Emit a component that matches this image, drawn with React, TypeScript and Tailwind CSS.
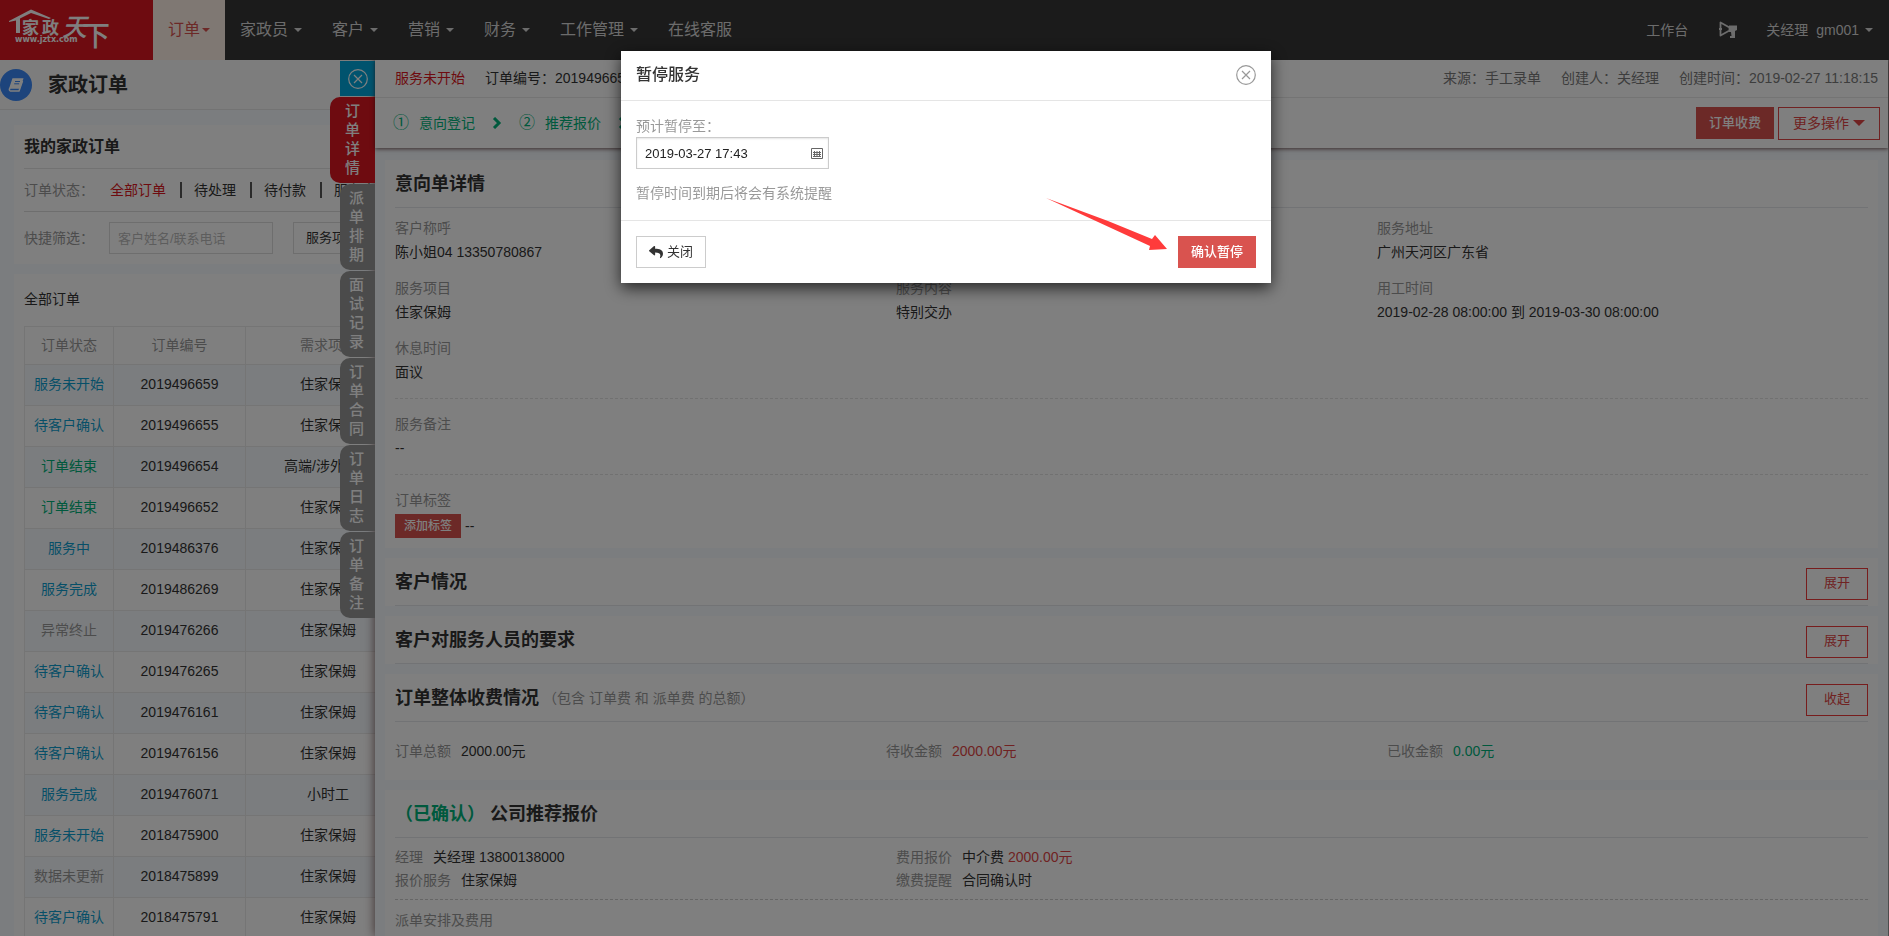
import { ReactNode } from "react";
import { FaReply } from "react-icons/fa";

const navItems = [
  { label: "家政员", caret: true },
  { label: "客户", caret: true },
  { label: "营销", caret: true },
  { label: "财务", caret: true },
  { label: "工作管理", caret: true },
  { label: "在线客服", caret: false },
];

const sideTabs = ["派单排期", "面试记录", "订单合同", "订单日志", "订单备注"];

const orders = [
  { status: "服务未开始", color: "text-[#0f9fd0]", no: "2019496659", project: "住家保姆" },
  { status: "待客户确认", color: "text-[#0f9fd0]", no: "2019496655", project: "住家保姆" },
  { status: "订单结束", color: "text-[#00b27a]", no: "2019496654", project: "高端/涉外保姆" },
  { status: "订单结束", color: "text-[#00b27a]", no: "2019496652", project: "住家保姆" },
  { status: "服务中", color: "text-[#0f9fd0]", no: "2019486376", project: "住家保姆" },
  { status: "服务完成", color: "text-[#0f9fd0]", no: "2019486269", project: "住家保姆" },
  { status: "异常终止", color: "text-[#999]", no: "2019476266", project: "住家保姆" },
  { status: "待客户确认", color: "text-[#0f9fd0]", no: "2019476265", project: "住家保姆" },
  { status: "待客户确认", color: "text-[#0f9fd0]", no: "2019476161", project: "住家保姆" },
  { status: "待客户确认", color: "text-[#0f9fd0]", no: "2019476156", project: "住家保姆" },
  { status: "服务完成", color: "text-[#0f9fd0]", no: "2019476071", project: "小时工" },
  { status: "服务未开始", color: "text-[#0f9fd0]", no: "2018475900", project: "住家保姆" },
  { status: "数据未更新", color: "text-[#999]", no: "2018475899", project: "住家保姆" },
  { status: "待客户确认", color: "text-[#0f9fd0]", no: "2018475791", project: "住家保姆" },
];

function Caret({ className = "h-1 w-2" }: { className?: string }) {
  return (
    <svg viewBox="0 0 8 4" className={className} fill="currentColor">
      <path d="M0 0h8L4 4z" />
    </svg>
  );
}

function Chevron() {
  return (
    <svg viewBox="0 0 12 12" className="mx-4 size-3" fill="none" stroke="currentColor" strokeWidth="3">
      <path d="M3 1l5 5-5 5" />
    </svg>
  );
}

function CloseCircle({ className = "" }: { className?: string }) {
  return (
    <svg viewBox="0 0 20 20" className={className} fill="none" stroke="currentColor" strokeWidth="1.2">
      <circle cx="10" cy="10" r="9.3" />
      <path d="M6 6l8 8M14 6l-8 8" />
    </svg>
  );
}

function Logo() {
  return (
    <svg viewBox="0 0 153 60" className="h-[60px] w-[153px]" fill="#fff">
      <path d="M9 21 31 9.5 51 18l-2 1-18-6-11 5.500V33h-4V20.500L9 22z" />
      <text x="22 42" y="34" fontSize="17" fontWeight="700">家政</text>
      <text x="62" y="36" fontSize="25" fontWeight="500" fontStyle="italic">天</text>
      <text x="82" y="46" fontSize="28" fontWeight="500">下</text>
      <text x="15" y="42" fontSize="8" fontWeight="700" className="[font-family:'DejaVu_Sans',sans-serif]">
        www.jztx.com
      </text>
    </svg>
  );
}

function TopBar() {
  return (
    <header className="relative z-10 flex h-[60px] shrink-0 items-center bg-[#363636] text-base text-[#d8d8d8]">
      <a href="#" aria-label="家政天下" className="h-[60px] bg-[#dc1620]">
        <Logo />
      </a>
      <nav className="flex">
        <a
          href="#"
          className="flex h-[60px] items-center gap-0.5 bg-[#fff0e6] px-[15px] text-[#d9534f]"
        >
          订单
          <Caret />
        </a>
        {navItems.map((item) => (
          <a
            key={item.label}
            href="#"
            className="flex h-[60px] items-center gap-1.5 px-[15px]"
          >
            {item.label}
            {item.caret && <Caret />}
          </a>
        ))}
      </nav>
      <div className="ml-auto flex items-center pr-4 text-sm">
        <a href="#">工作台</a>
        <button aria-label="消息" className="mr-7 ml-[30px]">
          <svg viewBox="0 0 20 18" className="h-[18px] w-5" fill="none" stroke="currentColor">
            <path d="M2.500 1.500v13l9-5v-3z" strokeWidth="1.800" strokeLinejoin="round" />
            <path d="M1 8h3" strokeWidth="2" />
            <path d="M11 4.500h8v4.500l-2 1v7h-5v-2h1.500l-.5-4H11z" fill="currentColor" stroke="none" />
          </svg>
        </button>
        <button className="flex items-center">
          <span>关经理</span>
          <span className="mr-1.5 ml-2">gm001</span>
          <Caret />
        </button>
      </div>
    </header>
  );
}

function OrderList() {
  return (
    <section className="h-full w-[411px] bg-[#f6fafe]">
      <div className="flex h-[50px] items-center border-b border-[#e6e6e6] bg-[#fbfbfb]">
        <span className="flex size-8 items-center justify-center rounded-full bg-[#3a88f8] text-white">
          <svg viewBox="0 0 16 14" className="h-3.5 w-4" fill="none" stroke="currentColor" strokeWidth="1.5">
            <path d="M5 1h9.500l-3 9H2z" fill="currentColor" />
            <path d="M2 10q-1.500 2.500.5 3h8.500l3.500-10" />
            <path d="M7 3.500h5M6.200 5.800h5" stroke="#3a88f8" strokeWidth="1" />
          </svg>
        </span>
        <h1 className="ml-4 text-xl font-bold">家政订单</h1>
      </div>

      <div className="mt-[15px] ml-3.5 h-[139px] bg-white pl-2.5">
        <h2 className="h-11 border-b border-[#e4e4e4] text-base leading-[44px] font-bold">
          我的家政订单
        </h2>
        <div className="flex h-[43px] items-center border-b border-[#ddd]">
          <span className="w-[86px] text-[#999]">订单状态：</span>
          <a href="#" className="text-[#dc1620]">全部订单</a>
          <i className="mr-3 ml-3.5 h-4 w-0.5 bg-[#555]" />
          <a href="#">待处理</a>
          <i className="mr-3 ml-3.5 h-4 w-0.5 bg-[#555]" />
          <a href="#">待付款</a>
          <i className="mr-3 ml-3.5 h-4 w-0.5 bg-[#555]" />
          <a href="#">服务中</a>
        </div>
        <div className="flex h-[52px] items-center">
          <label htmlFor="keyword" className="w-[85px] text-[#999]">快捷筛选：</label>
          <input
            id="keyword"
            placeholder="客户姓名/联系电话"
            className="h-8 w-[164px] border border-[#ddd] px-2 text-[13px] placeholder:text-[#bbb]"
          />
          <select
            aria-label="服务项目"
            className="ml-5 h-8 w-[100px] appearance-none border border-[#ddd] px-3 text-[13px]"
          >
            <option>服务项目</option>
          </select>
        </div>
      </div>

      <div className="mt-2.5 ml-3.5 bg-white pl-2.5">
        <h2 className="h-[52px] leading-[50px]">全部订单</h2>
        <table className="w-[387px] table-fixed border-collapse text-center">
          <thead>
            <tr className="h-[38px] text-[#999]">
              <th className="w-[89px] border border-[#eaeaea] pb-0.5 font-normal">订单状态</th>
              <th className="w-[132px] border border-[#eaeaea] pb-0.5 font-normal">订单编号</th>
              <th className="border border-[#eaeaea] pb-0.5 font-normal">需求项目</th>
            </tr>
          </thead>
          <tbody>
            {orders.map((o) => (
              <tr key={o.no} className="h-[41px] odd:bg-[#f6fafe]">
                <td className={`border border-[#eaeaea] pb-0.5 ${o.color}`}>{o.status}</td>
                <td className="border border-[#eaeaea] pb-0.5">{o.no}</td>
                <td className="border border-[#eaeaea] pb-0.5">{o.project}</td>
              </tr>
            ))}
          </tbody>
        </table>
      </div>
    </section>
  );
}

function SideTabs() {
  return (
    <div className="absolute top-px right-full flex flex-col items-end gap-px text-[15px] leading-[19px] font-medium text-white">
      <button aria-label="关闭" className="flex size-[35px] items-center justify-center bg-[#00a7dc]">
        <CloseCircle className="size-5" />
      </button>
      <button className="h-[86px] w-[45px] rounded-l-[10px] bg-[#dc1620] px-[15px] pb-0.5">
        订单详情
      </button>
      {sideTabs.map((tab) => (
        <button key={tab} className="h-[86px] w-[35px] rounded-l-[10px] bg-[#969696] pr-[11px] pb-0.5 pl-[9px]">
          {tab}
        </button>
      ))}
    </div>
  );
}

function Card({
  title,
  note,
  action,
  children,
}: {
  title: ReactNode;
  note?: string;
  action?: string;
  children?: ReactNode;
}) {
  return (
    <section className="bg-white px-2.5">
      <div className="flex h-12 items-center border-b border-[#e4e6ea]">
        <h2 className="text-lg font-bold">{title}</h2>
        {note && <span className="ml-1 text-[#999]">{note}</span>}
        {action && (
          <button className="mt-1 ml-auto h-8 border border-[#ef3b3b] px-[17px] text-[13px] text-[#e04545]">
            {action}
          </button>
        )}
      </div>
      {children}
    </section>
  );
}

function Field({ label, children }: { label: string; children: ReactNode }) {
  return (
    <div>
      <p className="text-[#999]">{label}</p>
      <p>{children}</p>
    </div>
  );
}

function InlineField({ label, children }: { label: string; children: ReactNode }) {
  return (
    <p className="flex gap-2.5">
      <span className="text-[#999]">{label}</span>
      <span>{children}</span>
    </p>
  );
}

function OrderDetail() {
  return (
    <div className="absolute inset-y-0 right-0 left-[375px] border-r border-[#999] bg-[#f6fafe] shadow-[0_0_10px_rgba(60,20,20,0.7)]">
      <SideTabs />
      <div className="relative bg-white shadow-[0_1px_4px_rgba(60,20,20,0.7)]">
        <div className="flex h-[38px] items-center border-b border-[#e8e8e8] pr-2.5 pb-0.5 pl-5">
          <span className="text-[#dc1620]">服务未开始</span>
          <span className="ml-5">订单编号：2019496659</span>
          <div className="ml-auto flex gap-5 text-[#7a7a7a]">
            <span>来源：手工录单</span>
            <span>创建人：关经理</span>
            <span>创建时间：2019-02-27 11:18:15</span>
          </div>
        </div>
        <div className="flex h-[50px] items-center pr-2 pl-[18px] text-[#00b27a]">
          <span className="text-base">①</span>
          <span className="ml-2.5">意向登记</span>
          <Chevron />
          <span className="text-base">②</span>
          <span className="ml-2.5">推荐报价</span>
          <Chevron />
          <button className="ml-auto h-8 bg-[#d9534f] px-[13px] text-[13px] font-medium text-white">
            订单收费
          </button>
          <button className="ml-1 flex h-[33px] items-center gap-1 border border-[#e04545] px-3.5 text-[#e04545]">
            更多操作
            <Caret className="h-1.5 w-3" />
          </button>
        </div>
      </div>

      <div className="mt-3 flex flex-col gap-2.5 px-2.5">
        <Card title="意向单详情">
          <div className="grid h-[190px] grid-cols-[501fr_481fr_491fr] content-start gap-y-3 pt-2 leading-6">
            <Field label="客户称呼">陈小姐04 13350780867</Field>
            <Field label="联系电话">13350780867</Field>
            <Field label="服务地址">广州天河区广东省</Field>
            <Field label="服务项目">住家保姆</Field>
            <Field label="服务内容">特别交办</Field>
            <Field label="用工时间">2019-02-28 08:00:00 到 2019-03-30 08:00:00</Field>
            <Field label="休息时间">面议</Field>
          </div>
          <div className="h-[76px] border-t border-dashed border-[#e2e2e2] pt-[13px] leading-6">
            <Field label="服务备注">--</Field>
          </div>
          <div className="h-[74px] border-t border-dashed border-[#e2e2e2] pt-[13px] leading-6">
            <p className="text-[#999]">订单标签</p>
            <div className="mt-0.5 flex items-center gap-1">
              <button className="h-6 bg-[#d9534f] px-[9px] text-xs font-medium text-white">
                添加标签
              </button>
              --
            </div>
          </div>
        </Card>

        <Card title="客户情况" action="展开" />
        <Card title="客户对服务人员的要求" action="展开" />

        <Card
          title="订单整体收费情况"
          note="（包含 订单费 和 派单费 的总额）"
          action="收起"
        >
          <div className="grid h-[58px] grid-cols-[491fr_501fr_481fr] items-center">
            <InlineField label="订单总额">2000.00元</InlineField>
            <InlineField label="待收金额">
              <span className="text-[#e04545]">2000.00元</span>
            </InlineField>
            <InlineField label="已收金额">
              <span className="text-[#00b27a]">0.00元</span>
            </InlineField>
          </div>
        </Card>

        <Card
          title={
            <>
              <span className="text-[#00b27a]">（已确认）</span> 公司推荐报价
            </>
          }
        >
          <div className="grid grid-cols-[501fr_972fr] pt-2 pb-[7px] leading-[23px]">
            <InlineField label="经理">关经理 13800138000</InlineField>
            <InlineField label="费用报价">
              中介费 <span className="text-[#e04545]">2000.00元</span>
            </InlineField>
            <InlineField label="报价服务">住家保姆</InlineField>
            <InlineField label="缴费提醒">合同确认时</InlineField>
          </div>
          <div className="h-20 border-t border-dashed border-[#ccc] pt-2 leading-6 text-[#999]">
            派单安排及费用
          </div>
        </Card>
      </div>
    </div>
  );
}

function PauseDialog() {
  return (
    <div className="fixed inset-0 z-20 flex items-start justify-center overflow-hidden bg-black/50">
      <div
        role="dialog"
        aria-label="暂停服务"
        className="relative mt-[51px] ml-[3px] w-[650px] bg-white shadow-[0_5px_15px_rgba(0,0,0,0.7)]"
      >
        <div className="flex h-[50px] items-center justify-between border-b border-[#e5e5e5] px-[15px] pb-0.5">
          <h3 className="text-base font-medium">暂停服务</h3>
          <button aria-label="关闭" className="text-[#999]">
            <CloseCircle className="size-5" />
          </button>
        </div>
        <div className="flex h-[120px] flex-col items-start border-b border-[#e5e5e5] px-[15px] pt-[15px] leading-[21px] text-[#999]">
          <label htmlFor="pauseTo">预计暂停至：</label>
          <div className="relative">
            <input
              id="pauseTo"
              defaultValue="2019-03-27 17:43"
              className="h-8 w-[193px] border border-[#ccc] px-2 text-[13px] text-[#222] shadow-[inset_0_1px_2px_rgba(0,0,0,0.1)]"
            />
            <svg viewBox="0 0 12 12" className="absolute top-2.5 right-1.5 size-3" fill="none" stroke="#666">
              <path d="M.5 1.500h11v10H.5zM2 5.500h8M2 7.500h8M2 9.500h8M3.500 4v6M6 4v6M8.500 4v6" />
            </svg>
          </div>
          <p className="mt-3.5">暂停时间到期后将会有系统提醒</p>
        </div>
        <div className="flex items-center justify-between px-[15px] py-[15px] text-[13px]">
          <button className="flex h-8 items-center gap-1 border border-[#ccc] px-3 text-[#333]">
            <FaReply className="size-3.5" />
            关闭
          </button>
          <button className="h-8 bg-[#d9534f] px-[13px] font-medium text-white">确认暂停</button>
        </div>
        {/* pointer to the confirm button */}
        <svg
          viewBox="0 0 122 54"
          className="pointer-events-none absolute right-[103px] bottom-[31px] h-[54px] w-[122px]"
          fill="#ff3b3b"
        >
          <path d="M0 0 62 23l44 18 3-4 12 14-18 1 1-4-52-24z" />
        </svg>
      </div>
    </div>
  );
}

export default function App() {
  return (
    <div className="flex h-screen flex-col overflow-hidden text-sm text-[#333] [font-family:'Liberation_Sans','Noto_Sans_CJK_SC',sans-serif]">
      <TopBar />
      <main className="relative min-h-0 flex-1">
        <div className="h-full overflow-hidden">
          <OrderList />
        </div>
        <OrderDetail />
      </main>
      <PauseDialog />
    </div>
  );
}
